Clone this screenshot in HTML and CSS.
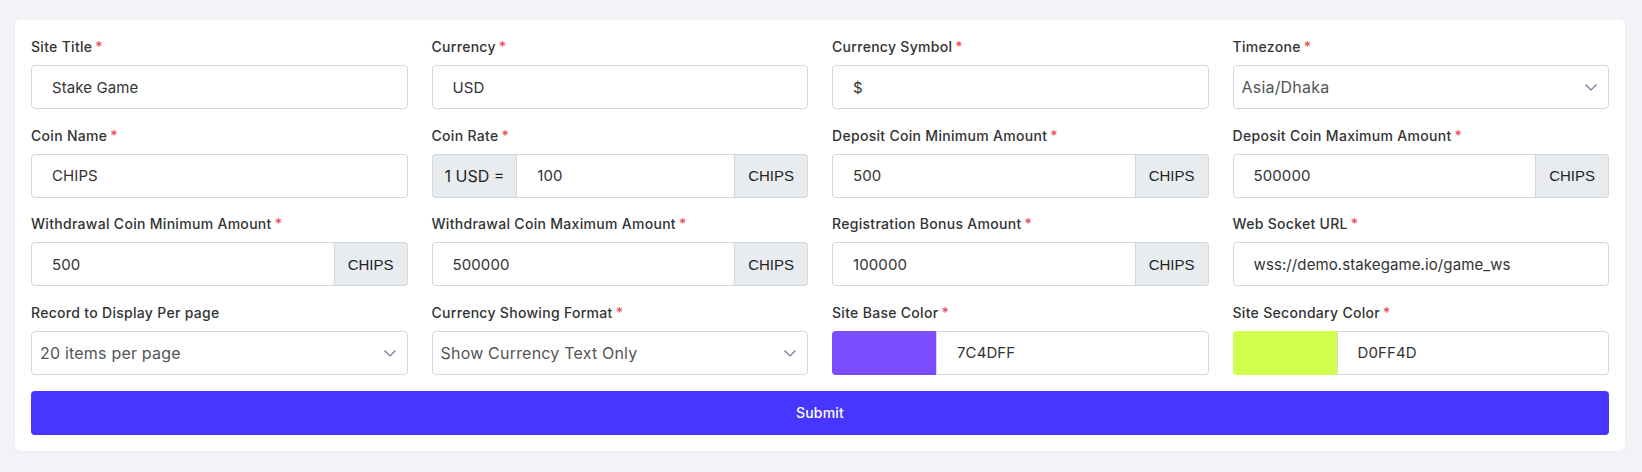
FILE: index.html
```html
<!DOCTYPE html>
<html lang="en">
<head>
  <meta charset="UTF-8" />
  <meta name="viewport" content="width=device-width, initial-scale=1" />
  <title>General Settings</title>
  <link rel="stylesheet" href="styles.css">
</head>
<body>

  <form class="card" onsubmit="return false;">
    <div class="grid">

      <div class="field">
        <label>Site Title<span class="req">*</span></label>
        <input type="text" class="control" value="Stake Game" />
      </div>

      <div class="field">
        <label>Currency<span class="req">*</span></label>
        <input type="text" class="control" value="USD" />
      </div>

      <div class="field">
        <label>Currency Symbol<span class="req">*</span></label>
        <input type="text" class="control" value="$" />
      </div>

      <div class="field">
        <label>Timezone<span class="req">*</span></label>
        <div class="select-wrap">
          <select class="control select">
            <option>Asia/Dhaka</option>
          </select>
          <svg class="chevron" viewBox="0 0 12 7" width="12" height="7"><path d="M0.5 0.5 L6 6 L11.5 0.5" fill="none" stroke="#6b7891" stroke-width="1.2"/></svg>
        </div>
      </div>

      <div class="field">
        <label>Coin Name<span class="req">*</span></label>
        <input type="text" class="control" value="CHIPS" />
      </div>

      <div class="field">
        <label>Coin Rate<span class="req">*</span></label>
        <div class="input-group">
          <span class="addon addon-left rate">1 USD =</span>
          <input type="text" class="control" value="100" />
          <span class="addon">CHIPS</span>
        </div>
      </div>

      <div class="field">
        <label>Deposit Coin Minimum Amount<span class="req">*</span></label>
        <div class="input-group">
          <input type="text" class="control" value="500" />
          <span class="addon">CHIPS</span>
        </div>
      </div>

      <div class="field">
        <label>Deposit Coin Maximum Amount<span class="req">*</span></label>
        <div class="input-group">
          <input type="text" class="control" value="500000" />
          <span class="addon">CHIPS</span>
        </div>
      </div>

      <div class="field">
        <label>Withdrawal Coin Minimum Amount<span class="req">*</span></label>
        <div class="input-group">
          <input type="text" class="control" value="500" />
          <span class="addon">CHIPS</span>
        </div>
      </div>

      <div class="field">
        <label>Withdrawal Coin Maximum Amount<span class="req">*</span></label>
        <div class="input-group">
          <input type="text" class="control" value="500000" />
          <span class="addon">CHIPS</span>
        </div>
      </div>

      <div class="field">
        <label>Registration Bonus Amount<span class="req">*</span></label>
        <div class="input-group">
          <input type="text" class="control" value="100000" />
          <span class="addon">CHIPS</span>
        </div>
      </div>

      <div class="field">
        <label>Web Socket URL<span class="req">*</span></label>
        <input type="text" class="control" value="wss://demo.stakegame.io/game_ws" />
      </div>

      <div class="field">
        <label>Record to Display Per page</label>
        <div class="select-wrap">
          <select class="control select">
            <option>20 items per page</option>
          </select>
          <svg class="chevron" viewBox="0 0 12 7" width="12" height="7"><path d="M0.5 0.5 L6 6 L11.5 0.5" fill="none" stroke="#6b7891" stroke-width="1.2"/></svg>
        </div>
      </div>

      <div class="field">
        <label>Currency Showing Format<span class="req">*</span></label>
        <div class="select-wrap">
          <select class="control select">
            <option>Show Currency Text Only</option>
          </select>
          <svg class="chevron" viewBox="0 0 12 7" width="12" height="7"><path d="M0.5 0.5 L6 6 L11.5 0.5" fill="none" stroke="#6b7891" stroke-width="1.2"/></svg>
        </div>
      </div>

      <div class="field">
        <label>Site Base Color<span class="req">*</span></label>
        <div class="input-group">
          <span class="swatch" style="background-color:#7c4dff;"></span>
          <input type="text" class="control" value="7C4DFF" />
        </div>
      </div>

      <div class="field">
        <label>Site Secondary Color<span class="req">*</span></label>
        <div class="input-group">
          <span class="swatch" style="background-color:#d0ff4d;"></span>
          <input type="text" class="control" value="D0FF4D" />
        </div>
      </div>

    </div>

    <button type="submit" class="submit">Submit</button>
  </form>

</body>
</html>
```

FILE: styles.css
```css
body {
  margin: 0;
  padding: 20px 17px 21px 15px;
  background-color: #f2f2f7;
  font-family: 'Inter', 'Noto Sans', sans-serif;
  color: #333;
}

.card {
  background-color: #fff;
  border-radius: 6px;
  padding: 17px 16px 16px;
  box-shadow: 0 1px 3px rgba(60, 60, 90, 0.04);
}

.grid {
  display: grid;
  grid-template-columns: repeat(4, 1fr);
  column-gap: 24px;
  row-gap: 16.5px;
}

.field {
  display: flex;
  flex-direction: column;
  min-width: 0;
}

label {
  font-size: 14px;
  font-weight: 500;
  line-height: 20px;
  letter-spacing: 0.3px;
  color: #333;
  margin-bottom: 8px;
}

.req {
  color: #ea4d5a;
  margin-left: 3px;
}

.control {
  box-sizing: border-box;
  height: 44px;
  width: 100%;
  min-width: 0;
  padding: 0 20px;
  font-family: inherit;
  font-size: 15px;
  letter-spacing: 0.1px;
  color: #333;
  background-color: #fff;
  border: 1px solid #d3d6de;
  border-radius: 4px;
  outline: none;
}

.select-wrap {
  position: relative;
}

.select {
  appearance: none;
  -webkit-appearance: none;
  padding: 0 32px 0 8px;
  font-size: 16px;
  letter-spacing: 0.2px;
  color: #555;
}

.chevron {
  position: absolute;
  right: 12px;
  top: 19px;
  pointer-events: none;
}

.input-group {
  display: flex;
  height: 44px;
}

.input-group .control {
  flex: 1;
  border-radius: 0;
}

.input-group .control:first-child {
  border-top-left-radius: 4px;
  border-bottom-left-radius: 4px;
}

.input-group .control:last-child {
  border-top-right-radius: 4px;
  border-bottom-right-radius: 4px;
}

.addon {
  display: flex;
  align-items: center;
  padding: 0 13px;
  font-family: 'Liberation Sans', Arial, sans-serif;
  font-size: 15px;
  color: #212529;
  background-color: #e9ecef;
  border: 1px solid #d3d6de;
  border-left: none;
  border-radius: 0 4px 4px 0;
}

.addon-left {
  border-left: 1px solid #d3d6de;
  border-right: none;
  border-radius: 4px 0 0 4px;
}

.rate {
  font-family: inherit;
  font-size: 16px;
  padding: 0 12px;
}

.swatch {
  width: 104px;
  flex: none;
  border-radius: 4px 0 0 4px;
}

.swatch + .control {
  border-left: 1px solid #d3d6de;
}

.submit {
  display: block;
  width: 100%;
  height: 44px;
  margin-top: 16px;
  font-family: inherit;
  font-size: 14px;
  font-weight: 500;
  letter-spacing: 0.2px;
  color: #fff;
  background-color: #4636ff;
  border: none;
  border-radius: 4px;
  cursor: pointer;
}

.submit:hover {
  background-color: #3826f0;
}
```
